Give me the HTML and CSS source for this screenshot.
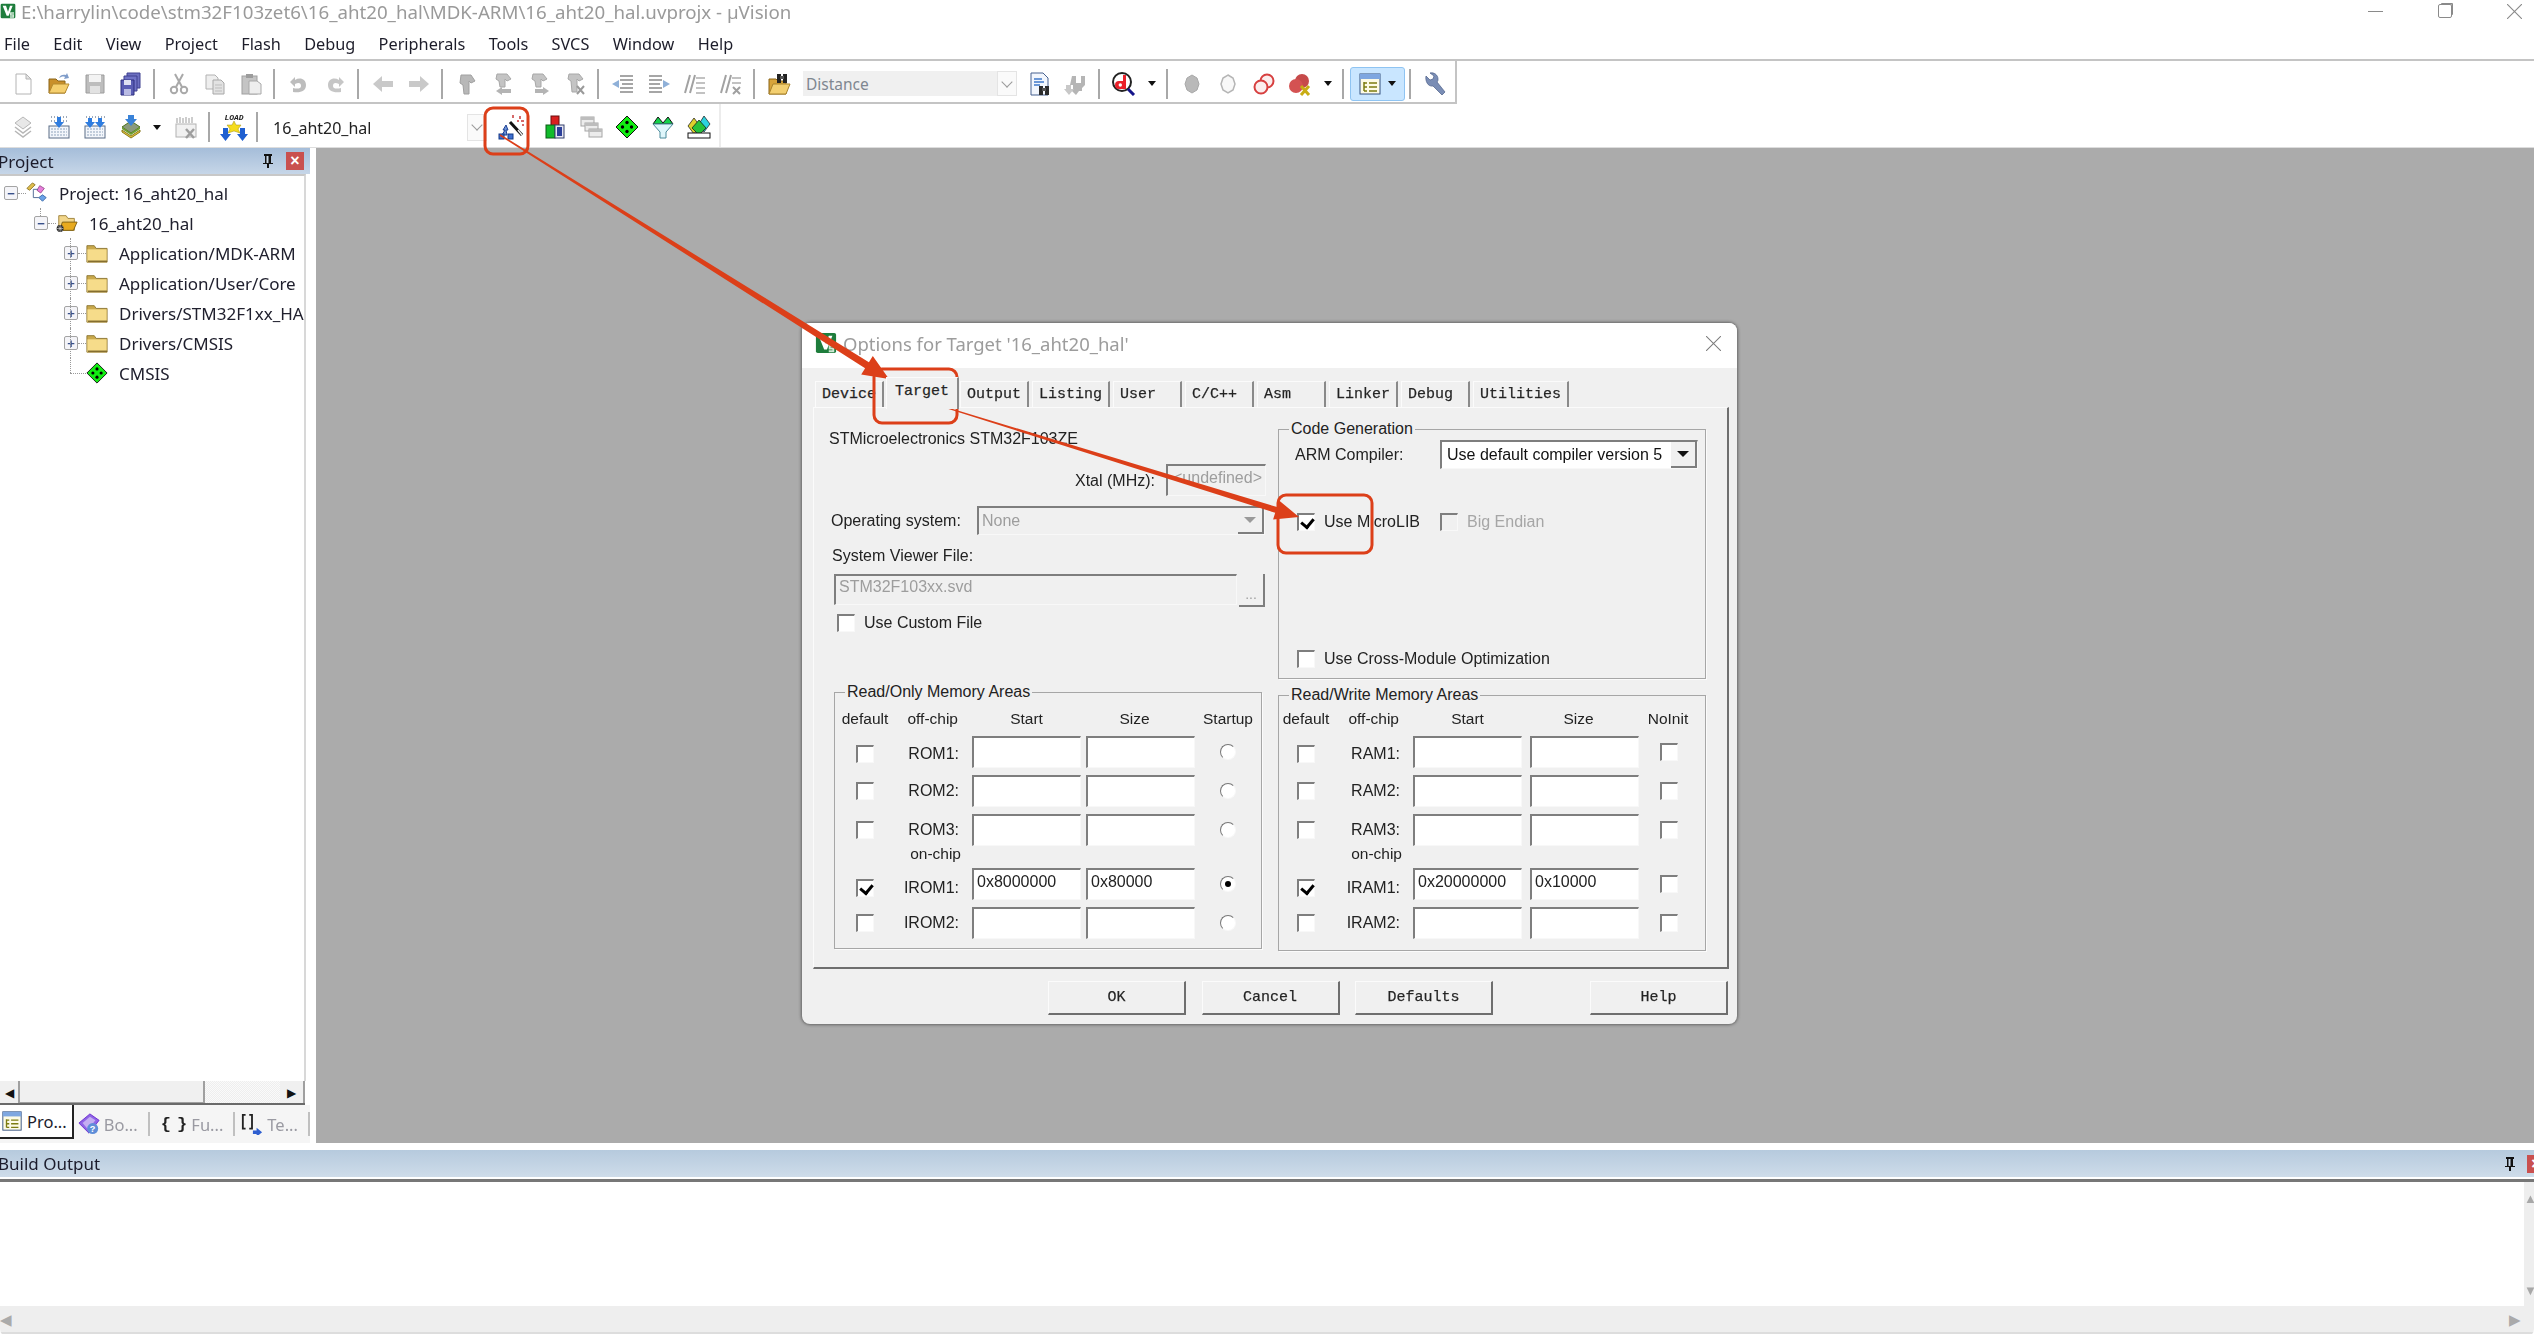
FILE: index.html
```html
<!DOCTYPE html>
<html lang="en">
<head>
    <meta charset="UTF-8">
    <meta name="viewport" content="width=device-width, initial-scale=1.0">
    <title>Options for Target</title>
    <link rel="stylesheet" href="styles.css">
</head>
<body>
<svg class="defs" width="0" height="0">
    <symbol id="i-logo" viewBox="0 0 24 24"><rect x="1" y="1" width="22" height="22" rx="2" fill="#1e7d3c"/><path d="M4 4l6 15 3 0 6-15-4 0-3 9-3-9z" fill="#fff"/><path d="M15 14h6v2h-4v1h4v5h-6v-2h4v-1h-4z" fill="#cfe8d5"/></symbol>
    <symbol id="i-new" viewBox="0 0 24 24"><path d="M5 2h10l5 5v15H5z" fill="#fff" stroke="#b4b4b4"/><path d="M15 2v5h5z" fill="#e4e4e4" stroke="#b4b4b4"/></symbol>
    <symbol id="i-open" viewBox="0 0 24 24"><path d="M2 7h7l2 2h7v12H2z" fill="#c98f2a" stroke="#8a6418"/><path d="M2 21l4-9h16l-4 9z" fill="#f5cf6e" stroke="#b58a2e"/><path d="M12 6c1-3 4-4 7-3l1-2 2 5-5 1 1-2c-2-1-4 0-6 1z" fill="#7f9cc9"/></symbol>
    <symbol id="i-save" viewBox="0 0 24 24"><path d="M3 3h18v18H3z" fill="#bdbdbd" stroke="#9c9c9c"/><rect x="6" y="3" width="12" height="7" fill="#f3f3f3"/><rect x="7" y="14" width="10" height="7" fill="#e2e2e2"/></symbol>
    <symbol id="i-saveall" viewBox="0 0 24 24"><path d="M8 1h13v15H8z" fill="#6c6fc0" stroke="#3e4090"/><path d="M5 4h13v15H5z" fill="#7073c6" stroke="#3e4090"/><path d="M2 8h13v15H2z" fill="#5a5db4" stroke="#2f3180"/><rect x="5" y="8" width="7" height="5" fill="#dfe0f3"/><rect x="5" y="17" width="7" height="6" fill="#b9bbe4"/></symbol>
    <symbol id="i-cut" viewBox="0 0 24 24"><g fill="none" stroke="#a9a9a9" stroke-width="2"><path d="M8 2l7 13M16 2L9 15"/><circle cx="7" cy="18" r="3.2"/><circle cx="17" cy="18" r="3.2"/></g></symbol>
    <symbol id="i-copy" viewBox="0 0 24 24"><path d="M3 3h9l3 3v11H3z" fill="#eee" stroke="#b2b2b2"/><path d="M10 8h8l3 3v11H10z" fill="#e2e2e2" stroke="#a8a8a8"/><path d="M12 13h7M12 16h7M12 19h7" stroke="#bdbdbd"/></symbol>
    <symbol id="i-paste" viewBox="0 0 24 24"><rect x="3" y="4" width="15" height="18" fill="#c4c4c4" stroke="#a0a0a0"/><rect x="7" y="2" width="7" height="4" fill="#9c9c9c"/><path d="M10 9h8l4 3v10H10z" fill="#eee" stroke="#a8a8a8"/></symbol>
    <symbol id="i-undo" viewBox="0 0 24 24"><path d="M6 20c8 1 13-1 13-7s-6-8-11-5V5L3 10l5 5v-3c4-2 6-1 6 2s-4 3-8 2z" fill="#bdbdbd"/></symbol>
    <symbol id="i-redo" viewBox="0 0 24 24"><path d="M18 20c-8 1-13-1-13-7s6-8 11-5V5l5 5-5 5v-3c-4-2-6-1-6 2s4 3 8 2z" fill="#c6c6c6"/></symbol>
    <symbol id="i-left" viewBox="0 0 24 24"><path d="M2 12l9-8v5h11v6H11v5z" fill="#c9c9c9"/></symbol>
    <symbol id="i-right" viewBox="0 0 24 24"><path d="M22 12l-9-8v5H2v6h11v5z" fill="#c9c9c9"/></symbol>
    <symbol id="i-flag" viewBox="0 0 24 24"><path d="M6 3h10l4 6-4 2-2-2v13H9l-1-9-3-2z" fill="#b8b8b8" stroke="#a0a0a0"/></symbol>
    <symbol id="i-flagl" viewBox="0 0 24 24"><path d="M6 2h10l4 5-4 2-2-2v8H9l-1-6-3-2z" fill="#c4c4c4" stroke="#a8a8a8"/><path d="M5 19l6-4v2h9v4h-9v2z" fill="#b4b4b4"/></symbol>
    <symbol id="i-flagr" viewBox="0 0 24 24"><path d="M6 2h10l4 5-4 2-2-2v8H9l-1-6-3-2z" fill="#c4c4c4" stroke="#a8a8a8"/><path d="M22 19l-6-4v2H8v4h8v2z" fill="#b4b4b4"/></symbol>
    <symbol id="i-flagx" viewBox="0 0 24 24"><path d="M6 2h10l4 5-4 2-2-2v13H9l-1-11-3-2z" fill="#c4c4c4" stroke="#a8a8a8"/><path d="M14 14l7 8m0-8l-7 8" stroke="#9a9a9a" stroke-width="2"/></symbol>
    <symbol id="i-indent" viewBox="0 0 24 24"><path d="M9 4h13M9 8h13M11 12h11M9 16h13M9 20h13" stroke="#a6a6a6" stroke-width="2"/><path d="M1 12l7-4v8z" fill="#8fb0d8"/></symbol>
    <symbol id="i-outdent" viewBox="0 0 24 24"><path d="M2 4h13M2 8h13M2 12h11M2 16h13M2 20h13" stroke="#a6a6a6" stroke-width="2"/><path d="M23 12l-7-4v8z" fill="#8fb0d8"/></symbol>
    <symbol id="i-comment" viewBox="0 0 24 24"><path d="M2 21L7 3M7 21L12 3" stroke="#a2a2a2" stroke-width="2"/><path d="M13 6h9M13 11h9M13 16h9M13 21h9" stroke="#c2c2c2" stroke-width="2"/></symbol>
    <symbol id="i-uncomment" viewBox="0 0 24 24"><path d="M2 21L7 3M7 21L12 3" stroke="#a2a2a2" stroke-width="2"/><path d="M13 6h9M13 11h9" stroke="#c2c2c2" stroke-width="2"/><path d="M14 15l7 7m0-7l-7 7" stroke="#a0a0a0" stroke-width="2"/></symbol>
    <symbol id="i-findfile" viewBox="0 0 24 24"><path d="M2 7h7l2 2h8v13H2z" fill="#d8a43a" stroke="#8a6418"/><path d="M2 22l4-10h17l-4 10z" fill="#f3cf70" stroke="#a9832b"/><rect x="10" y="2" width="4" height="9" fill="#222"/><rect x="16" y="2" width="4" height="9" fill="#222"/><rect x="13" y="4" width="4" height="3" fill="#555"/></symbol>
    <symbol id="i-finddoc" viewBox="0 0 24 24"><path d="M3 1h12l5 5v17H3z" fill="#f2f6fd" stroke="#47618f"/><path d="M6 7h8M6 10h10M6 13h6" stroke="#3f78c9" stroke-width="1.5"/><rect x="11" y="14" width="4" height="9" fill="#2b2b2b"/><rect x="17" y="14" width="4" height="9" fill="#2b2b2b"/><rect x="14" y="16" width="4" height="3" fill="#555"/></symbol>
    <symbol id="i-findgray" viewBox="0 0 24 24"><path d="M8 4l4 0v7h5V4h4v9l-3 3v3h-3l-3 4-6-6h3v-4H6z" fill="#b5b5b5"/><path d="M2 13h5v4h3l-5 6-5-6h2z" fill="#c8c8c8"/></symbol>
    <symbol id="i-debug" viewBox="0 0 24 24"><circle cx="10" cy="10" r="9" fill="#fff" stroke="#222" stroke-width="2"/><path d="M11 3h3v14h-7a4 4 0 0 1 0-8h4z" fill="#e9202a"/><circle cx="8.300" cy="13" r="1.700" fill="#fff"/><path d="M16 17l6 6" stroke="#14148a" stroke-width="3"/></symbol>
    <symbol id="i-bp" viewBox="0 0 24 24"><path d="M12 3l5 3 2 6-2 6-5 3-5-3-2-6 2-6z" fill="#b9b9b9" stroke="#a8a8a8"/></symbol>
    <symbol id="i-bphollow" viewBox="0 0 24 24"><path d="M12 3l5 3 2 6-2 6-5 3-5-3-2-6 2-6z" fill="#f8f8f8" stroke="#b5b5b5" stroke-width="1.500"/></symbol>
    <symbol id="i-bpmany" viewBox="0 0 24 24"><circle cx="15" cy="9" r="6.500" fill="#fbeeee" stroke="#d73f3f" stroke-width="2"/><circle cx="9" cy="15" r="6.500" fill="#fbeeee" stroke="#d73f3f" stroke-width="2"/></symbol>
    <symbol id="i-bpkill" viewBox="0 0 24 24"><circle cx="14" cy="9" r="7" fill="#c64a4a"/><circle cx="8" cy="14" r="7" fill="#d45252"/><path d="M13 14l8 9m0-9l-8 9" stroke="#c9ad14" stroke-width="3"/></symbol>
    <symbol id="i-window" viewBox="0 0 24 24"><rect x="2" y="2" width="20" height="20" fill="#fdfbe6" stroke="#34507f"/><rect x="2" y="2" width="20" height="5" fill="#7fa7e0"/><path d="M6 10v9M6 11h3M6 15h3M6 19h3M11 11h8M11 15h8M11 19h8" stroke="#7c7c10" stroke-width="1.500"/></symbol>
    <symbol id="i-wrench" viewBox="0 0 24 24"><path d="M3 4l4 4 3-1 1-3-4-3c4-1 8 2 8 6 0 1 0 2-1 3l8 10-3 3-9-9c-5 1-8-5-7-10z" fill="#7a8db5" stroke="#4c5f88" stroke-width=".7"/></symbol>
    <symbol id="i-stack" viewBox="0 0 24 24"><path d="M12 2l8 6-8 6-8-6z" fill="#e8e8e8" stroke="#b6b6b6"/><path d="M4 12l8 6 8-6M4 16l8 6 8-6" fill="none" stroke="#b6b6b6" stroke-width="1.500"/></symbol>
    <symbol id="i-build" viewBox="0 0 24 24"><path d="M4 2h1M7 2h1M10 2h1M13 2h1M16 2h1M19 2h1M4 6h1M7 6h1M16 6h1M19 6h1" stroke="#7d8da3" stroke-width="1.500"/><rect x="2" y="11" width="20" height="12" fill="#f3f6fb" stroke="#5a6d86"/><path d="M4 14h16M4 17h16M4 20h16" stroke="#8fa3bb" stroke-dasharray="2 1"/><path d="M10 2h4v5h3l-5 6-5-6h3z" fill="#2f7de0"/></symbol>
    <symbol id="i-rebuild" viewBox="0 0 24 24"><path d="M3 2h1M6 2h1M9 2h1M12 2h1M15 2h1M18 2h1M21 2h1" stroke="#7d8da3" stroke-width="1.500"/><rect x="2" y="11" width="20" height="12" fill="#f3f6fb" stroke="#5a6d86"/><path d="M4 14h16M4 17h16M4 20h16" stroke="#8fa3bb" stroke-dasharray="2 1"/><path d="M5 3h4v4h3l-5 6-5-6h3zM15 3h4v4h3l-5 6-5-6h3z" fill="#2f7de0"/></symbol>
    <symbol id="i-batch" viewBox="0 0 24 24"><path d="M12 6l9 6-9 6-9-6z" fill="#8a9a7d" stroke="#4e7118"/><path d="M3 15l9 6 9-6v2l-9 6-9-6z" fill="#e7c63a" stroke="#8a7a1e"/><path d="M3 12l9 6 9-6v2l-9 6-9-6z" fill="#6d9f2e"/><path d="M9 0h6v4h3l-6 7-6-7h3z" fill="#3a83d8"/></symbol>
    <symbol id="i-stop" viewBox="0 0 24 24"><rect x="2" y="9" width="20" height="13" fill="#f1f1f1" stroke="#b2b2b2"/><path d="M3 3v5M6 2v6M9 3v5M12 2v6M15 3v5M18 2v6" stroke="#bdbdbd" stroke-width="1.500"/><path d="M12 14l8 9m0-9l-8 9" stroke="#9e9e9e" stroke-width="2.500"/></symbol>
    <symbol id="i-load" viewBox="0 0 28 28"><text x="14" y="7" text-anchor="middle" font-family="Liberation Mono" font-size="8" font-weight="700" fill="#222">LOAD</text><path d="M14 8l2 4 5 0-3 4 2 4-6-2-6 2 2-4-3-4 5 0z" fill="#f5dc1e" stroke="#a08f10" stroke-width=".5"/><path d="M3 15h5v6h3l-5.500 7L0 21h3zM20 15h5v6h3l-5.500 7L17 21h3z" fill="#1f5fd0"/></symbol>
    <symbol id="i-wand" viewBox="0 0 28 28"><path d="M12 9l12 13" stroke="#111" stroke-width="3"/><path d="M20 17l4 5" stroke="#eee" stroke-width="1.500"/><path d="M15 2v3M22 3v3M26 8h-3M19 8h2M24 12h2" stroke="#c83a3a" stroke-width="1.500"/><path d="M8 12l-3 5h2l-3 5h5l-1-5h2z" fill="#6d93d6" stroke="#1c3f94"/><rect x="1" y="21" width="5" height="5" fill="#3d6fd0" stroke="#133a8a"/><rect x="10" y="21" width="5" height="5" fill="#3d6fd0" stroke="#133a8a"/></symbol>
    <symbol id="i-blocks" viewBox="0 0 24 24"><rect x="8" y="1" width="8" height="10" fill="#d81f1f" stroke="#6b0f0f"/><rect x="3" y="10" width="9" height="13" fill="#11bb2b" stroke="#0a5c16"/><rect x="12" y="10" width="9" height="13" fill="#e6e6f2" stroke="#35406d"/><rect x="14" y="12" width="5" height="9" fill="#2c3f9a"/></symbol>
    <symbol id="i-copies" viewBox="0 0 24 24"><rect x="2" y="2" width="13" height="9" fill="#ececec" stroke="#a6a6a6"/><rect x="2" y="2" width="13" height="3" fill="#bdbdbd"/><rect x="6" y="8" width="13" height="8" fill="#ececec" stroke="#a6a6a6"/><rect x="6" y="8" width="13" height="3" fill="#bdbdbd"/><rect x="10" y="14" width="13" height="8" fill="#ececec" stroke="#a6a6a6"/><rect x="10" y="14" width="13" height="3" fill="#bdbdbd"/></symbol>
    <symbol id="i-diamond" viewBox="0 0 24 24"><path d="M12 1l11 11-11 11L1 12z" fill="#12ee12" stroke="#111"/><circle cx="12" cy="7.500" r="1.700"/><circle cx="7.500" cy="12" r="1.700"/><circle cx="16.500" cy="12" r="1.700"/><circle cx="12" cy="16.500" r="1.700"/></symbol>
    <symbol id="i-funnel" viewBox="0 0 24 24"><path d="M7 2l5 6 5-6 5 7H2z" fill="#14d24a" stroke="#111"/><path d="M2 9h20l-7 8v6H9v-6z" fill="#dff6fb" stroke="#4a8a9a"/></symbol>
    <symbol id="i-packs" viewBox="0 0 24 24"><path d="M17 1l6 8-6 8-5-8z" fill="#2dd3de" stroke="#111" stroke-width=".7"/><path d="M7 3l6 8-6 8-6-8z" fill="#ded02d" stroke="#111" stroke-width=".7"/><path d="M12 5l7 8-7 7-7-7z" fill="#27c23a" stroke="#111" stroke-width=".7"/><rect x="1" y="18" width="22" height="5" fill="#fff" stroke="#111"/></symbol>
    <symbol id="i-proj" viewBox="0 0 24 24"><path d="M1 7l6-6 3 2-6 6z" fill="#e0bd4c" stroke="#8d7624"/><path d="M15 4l5 3-4 5-4-3z" fill="#e87fdc" stroke="#9b4d92"/><path d="M18 14l4 3-4 4-4-4z" fill="#6aa3e8" stroke="#3e6cab"/><path d="M8 8v9h6M8 8h5" fill="none" stroke="#4a6690"/></symbol>
    <symbol id="i-folderopen" viewBox="0 0 24 24"><path d="M3 4h8l2 3h7v13H3z" fill="#f2d68a" stroke="#9e8139"/><path d="M4 20l3-9h16l-4 9z" fill="#e8aa1f" stroke="#7d5f14"/><circle cx="4.500" cy="18" r="3.800" fill="#222"/><path d="M1 18h7M4.500 14v8M2 15.500l5 5m0-5l-5 5" stroke="#ddd" stroke-width=".7"/></symbol>
    <symbol id="i-folder" viewBox="0 0 24 24"><path d="M1 4h8l2 3h12v15H1z" fill="#c9a94c" stroke="#8d7632"/><rect x="1.500" y="8" width="21" height="14" fill="#f6dc8a"/><path d="M2 21h21" stroke="#7d6729" stroke-width="1.500"/></symbol>
    <symbol id="i-book" viewBox="0 0 24 24"><path d="M1 11L13 1l10 7-11 14z" fill="#8f64e6" stroke="#6a2bd0"/><path d="M5 11l8-7 6 4-8 10z" fill="#c4aef2"/><circle cx="16" cy="17" r="6" fill="#5f8ed8"/><text x="16" y="21" text-anchor="middle" font-family="Liberation Sans" font-size="10" font-weight="700" fill="#fff">?</text></symbol>
    <symbol id="i-template" viewBox="0 0 24 24"><path d="M5 2H2v15h3M9 2h3v15H9" fill="none" stroke="#222" stroke-width="2"/><path d="M13 19h4v-3l6 5-6 5v-3h-4z" fill="#2f5fd0"/></symbol>
    <symbol id="i-pin" viewBox="0 0 16 16"><path d="M4 1h8v2h-1v7h2v1H9v4H7v-4H3v-1h2V3H4z" fill="#111"/><rect x="6.500" y="3" width="2" height="7" fill="#c8d8e8"/></symbol>
</svg>

<div class="app">
    <header class="titlebar">
        <svg class="title-logo"><use href="#i-logo"/></svg>
        <span class="title-text">E:\harrylin\code\stm32F103zet6\16_aht20_hal\MDK-ARM\16_aht20_hal.uvprojx - µVision</span>
        <div class="win-controls">
            <span class="win-min"></span>
            <span class="win-restore"></span>
            <svg class="win-close" viewBox="0 0 16 16"><path d="M0 0l16 16M16 0L0 16" stroke="#8a8a8a" stroke-width="1.200"/></svg>
        </div>
    </header>

    <nav class="menubar">
        <a>File</a><a>Edit</a><a>View</a><a>Project</a><a>Flash</a><a>Debug</a><a>Peripherals</a><a>Tools</a><a>SVCS</a><a>Window</a><a>Help</a>
    </nav>

    <div class="toolbar toolbar-file">
        <i class="tb"><svg><use href="#i-new"/></svg></i>
        <i class="tb"><svg><use href="#i-open"/></svg></i>
        <i class="tb"><svg><use href="#i-save"/></svg></i>
        <i class="tb"><svg><use href="#i-saveall"/></svg></i>
        <b class="tb-sep"></b>
        <i class="tb"><svg><use href="#i-cut"/></svg></i>
        <i class="tb"><svg><use href="#i-copy"/></svg></i>
        <i class="tb"><svg><use href="#i-paste"/></svg></i>
        <b class="tb-sep"></b>
        <i class="tb"><svg><use href="#i-undo"/></svg></i>
        <i class="tb"><svg><use href="#i-redo"/></svg></i>
        <b class="tb-sep"></b>
        <i class="tb"><svg><use href="#i-left"/></svg></i>
        <i class="tb"><svg><use href="#i-right"/></svg></i>
        <b class="tb-sep"></b>
        <i class="tb"><svg><use href="#i-flag"/></svg></i>
        <i class="tb"><svg><use href="#i-flagl"/></svg></i>
        <i class="tb"><svg><use href="#i-flagr"/></svg></i>
        <i class="tb"><svg><use href="#i-flagx"/></svg></i>
        <b class="tb-sep"></b>
        <i class="tb"><svg><use href="#i-indent"/></svg></i>
        <i class="tb"><svg><use href="#i-outdent"/></svg></i>
        <i class="tb"><svg><use href="#i-comment"/></svg></i>
        <i class="tb"><svg><use href="#i-uncomment"/></svg></i>
        <b class="tb-sep"></b>
        <i class="tb"><svg><use href="#i-findfile"/></svg></i>
        <div class="tb-combo disabled"><span>Distance</span><em class="chev"></em></div>
        <i class="tb"><svg><use href="#i-finddoc"/></svg></i>
        <i class="tb"><svg><use href="#i-findgray"/></svg></i>
        <b class="tb-sep"></b>
        <i class="tb"><svg><use href="#i-debug"/></svg></i>
        <u class="tb-drop"></u>
        <b class="tb-sep"></b>
        <i class="tb"><svg><use href="#i-bp"/></svg></i>
        <i class="tb"><svg><use href="#i-bphollow"/></svg></i>
        <i class="tb"><svg><use href="#i-bpmany"/></svg></i>
        <i class="tb"><svg><use href="#i-bpkill"/></svg></i>
        <u class="tb-drop"></u>
        <b class="tb-sep"></b>
        <div class="tb-active"><svg><use href="#i-window"/></svg><u class="tb-drop"></u></div>
        <b class="tb-sep"></b>
        <i class="tb"><svg><use href="#i-wrench"/></svg></i>
    </div>

    <div class="toolbar toolbar-build">
        <i class="tb"><svg><use href="#i-stack"/></svg></i>
        <i class="tb"><svg><use href="#i-build"/></svg></i>
        <i class="tb"><svg><use href="#i-rebuild"/></svg></i>
        <i class="tb"><svg><use href="#i-batch"/></svg></i>
        <u class="tb-drop narrow"></u>
        <i class="tb tb-stop"><svg><use href="#i-stop"/></svg></i>
        <b class="tb-sep"></b>
        <i class="tb tb-load"><svg><use href="#i-load"/></svg></i>
        <b class="tb-sep"></b>
        <div class="tb-combo target"><span>16_aht20_hal</span><em class="chev"></em></div>
        <i class="tb tb-wand"><svg><use href="#i-wand"/></svg></i>
        <i class="tb tb-blocks"><svg><use href="#i-blocks"/></svg></i>
        <i class="tb"><svg><use href="#i-copies"/></svg></i>
        <i class="tb"><svg><use href="#i-diamond"/></svg></i>
        <i class="tb"><svg><use href="#i-funnel"/></svg></i>
        <i class="tb"><svg><use href="#i-packs"/></svg></i>
    </div>

    <div class="workspace">
        <aside class="project">
            <div class="dock-head">
                <span class="dock-title">Project</span>
                <svg class="dock-pin"><use href="#i-pin"/></svg>
                <span class="dock-close">×</span>
            </div>
            <ul class="tree">
                <li class="node lv1"><span class="box">−</span><svg class="ico"><use href="#i-proj"/></svg><span>Project: 16_aht20_hal</span></li>
                <li class="node lv2"><span class="box">−</span><svg class="ico"><use href="#i-folderopen"/></svg><span>16_aht20_hal</span></li>
                <li class="node lv3"><span class="box">+</span><svg class="ico"><use href="#i-folder"/></svg><span>Application/MDK-ARM</span></li>
                <li class="node lv3"><span class="box">+</span><svg class="ico"><use href="#i-folder"/></svg><span>Application/User/Core</span></li>
                <li class="node lv3"><span class="box">+</span><svg class="ico"><use href="#i-folder"/></svg><span>Drivers/STM32F1xx_HAL_Driver</span></li>
                <li class="node lv3"><span class="box">+</span><svg class="ico"><use href="#i-folder"/></svg><span>Drivers/CMSIS</span></li>
                <li class="node lv3 leaf"><span class="box none"></span><svg class="ico"><use href="#i-diamond"/></svg><span>CMSIS</span></li>
            </ul>
            <div class="hscroll">
                <span class="sb-btn">◀</span>
                <span class="sb-thumb"></span>
                <span class="sb-track"></span>
                <span class="sb-btn">▶</span>
            </div>
            <div class="dock-tabs">
                <div class="dock-tab active"><svg><use href="#i-window"/></svg><span>Pro...</span></div>
                <div class="dock-tab"><svg><use href="#i-book"/></svg><span>Bo...</span></div>
                <div class="dock-tab"><strong>{ }</strong><span>Fu...</span></div>
                <div class="dock-tab"><svg><use href="#i-template"/></svg><span>Te...</span></div>
            </div>
        </aside>

        <main class="mdi">
            <section class="dialog">
                <div class="dlg-title">
                    <svg class="dlg-logo"><use href="#i-logo"/></svg>
                    <span class="dlg-caption">Options for Target '16_aht20_hal'</span>
                    <svg class="dlg-close" viewBox="0 0 16 16"><path d="M0 0l16 16M16 0L0 16" stroke="#7c7c7c" stroke-width="1.100"/></svg>
                </div>

                <div class="tabs">
                    <span class="tab">Device</span>
                    <span class="tab selected">Target</span>
                    <span class="tab">Output</span>
                    <span class="tab">Listing</span>
                    <span class="tab">User</span>
                    <span class="tab">C/C++</span>
                    <span class="tab">Asm</span>
                    <span class="tab">Linker</span>
                    <span class="tab">Debug</span>
                    <span class="tab">Utilities</span>
                </div>

                <div class="pane">
                    <div class="device">
                        <div class="device-name">STMicroelectronics STM32F103ZE</div>
                        <div class="xtal"><label>Xtal (MHz):</label><span class="field off">&lt;undefined&gt;</span></div>
                        <div class="os"><label>Operating system:</label><div class="field off select"><span>None</span><em class="arrow grey"></em></div></div>
                        <div class="svd-label">System Viewer File:</div>
                        <div class="svd"><span class="field off">STM32F103xx.svd</span><button class="dots">...</button></div>
                        <label class="check custom"><i class="cb"></i>Use Custom File</label>
                    </div>

                    <div class="group codegen">
                        <span class="group-title">Code Generation</span>
                        <div class="compiler"><label>ARM Compiler:</label><div class="field select"><span>Use default compiler version 5</span><em class="arrow"></em></div></div>
                        <div class="libs">
                            <label class="check micro"><i class="cb on"></i>Use MicroLIB</label>
                            <label class="check dim"><i class="cb"></i>Big Endian</label>
                        </div>
                        <label class="check cross"><i class="cb"></i>Use Cross-Module Optimization</label>
                    </div>

                    <div class="group mem rom">
                        <span class="group-title">Read/Only Memory Areas</span>
                        <span class="hd">default</span><span class="hd off-chip">off-chip</span><span class="hd start">Start</span><span class="hd size">Size</span><span class="hd last">Startup</span>
                        <span class="c low"><i class="cb"></i></span><span class="n low">ROM1:</span><span class="field"></span><span class="field"></span><span class="c end"><i class="rb"></i></span>
                        <span class="c"><i class="cb"></i></span><span class="n">ROM2:</span><span class="field"></span><span class="field"></span><span class="c end"><i class="rb"></i></span>
                        <span class="c"><i class="cb"></i></span><span class="n">ROM3:</span><span class="field"></span><span class="field"></span><span class="c end"><i class="rb"></i></span>
                        <span class="on-chip">on-chip</span>
                        <span class="c lower"><i class="cb on"></i></span><span class="n lower">IROM1:</span><span class="field val">0x8000000</span><span class="field val">0x80000</span><span class="c end"><i class="rb on"></i></span>
                        <span class="c"><i class="cb"></i></span><span class="n">IROM2:</span><span class="field"></span><span class="field"></span><span class="c end"><i class="rb"></i></span>
                    </div>

                    <div class="group mem ram">
                        <span class="group-title">Read/Write Memory Areas</span>
                        <span class="hd">default</span><span class="hd off-chip">off-chip</span><span class="hd start">Start</span><span class="hd size">Size</span><span class="hd last">NoInit</span>
                        <span class="c low"><i class="cb"></i></span><span class="n low">RAM1:</span><span class="field"></span><span class="field"></span><span class="c end"><i class="cb"></i></span>
                        <span class="c"><i class="cb"></i></span><span class="n">RAM2:</span><span class="field"></span><span class="field"></span><span class="c end"><i class="cb"></i></span>
                        <span class="c"><i class="cb"></i></span><span class="n">RAM3:</span><span class="field"></span><span class="field"></span><span class="c end"><i class="cb"></i></span>
                        <span class="on-chip">on-chip</span>
                        <span class="c lower"><i class="cb on"></i></span><span class="n lower">IRAM1:</span><span class="field val">0x20000000</span><span class="field val">0x10000</span><span class="c end"><i class="cb"></i></span>
                        <span class="c"><i class="cb"></i></span><span class="n">IRAM2:</span><span class="field"></span><span class="field"></span><span class="c end"><i class="cb"></i></span>
                    </div>
                </div>

                <div class="dlg-buttons">
                    <button>OK</button>
                    <button>Cancel</button>
                    <button>Defaults</button>
                    <button class="help">Help</button>
                </div>
            </section>
        </main>
    </div>

    <footer class="output">
        <div class="dock-head output-head">
            <span class="dock-title">Build Output</span>
            <svg class="dock-pin"><use href="#i-pin"/></svg>
            <span class="dock-close">×</span>
        </div>
        <div class="output-body">
            <div class="output-text"></div>
            <div class="vscroll"><span>▲</span><span>▼</span></div>
        </div>
        <div class="output-scroll"><span>◀</span><span>▶</span></div>
    </footer>

    <!-- red annotations drawn on top of the screenshot -->
    <svg class="marks" viewBox="0 0 2534 1337">
        <g fill="none" stroke="#dc3f19" stroke-width="3">
            <rect x="485" y="108" width="43" height="46" rx="8"/>
            <rect x="874" y="369" width="83" height="54" rx="8"/>
            <rect x="1278" y="495" width="94" height="58" rx="8"/>
        </g>
        <g fill="#dc3f19">
            <polygon points="500.4,134.3 868.9,362.2 872.8,355.9 889,379 861.2,374.5 865.1,368.2 499.6,135.7"/>
            <polygon points="928.1,401.5 1277,507 1279.1,500.4 1299,517 1273.1,519.4 1275.2,512.8 927.9,402.5"/>
        </g>
    </svg>
</div>
</body>
</html>
```

FILE: styles.css
```css
* {
    margin: 0;
    padding: 0;
    box-sizing: border-box;
}

body {
    background: #fff;
    font-family: "Noto Sans", sans-serif;
    color: #222;
}

.defs {
    position: absolute;
}

/* the source is an upscaled capture, so everything is a little soft */
.app {
    position: relative;
    width: 2534px;
    height: 1337px;
    overflow: hidden;
    display: flex;
    flex-direction: column;
    filter: blur(.35px);
}

/* Title bar */
.titlebar {
    height: 22px;
    display: flex;
    align-items: center;
    flex-shrink: 0;
}

.title-logo {
    width: 16px;
    height: 20px;
    margin-right: 5px;
}

.title-text {
    font-size: 18.700px;
    color: #9a9a9a;
    white-space: nowrap;
}

.win-controls {
    margin-left: auto;
    margin-right: 12px;
    display: flex;
    align-items: center;
    gap: 55px;
    height: 20px;
}

.win-min {
    width: 15px;
    height: 1px;
    background: #8a8a8a;
}

.win-restore {
    width: 14px;
    height: 14px;
    border: 1px solid #8a8a8a;
    border-radius: 2px;
    box-shadow: 2px -2px 0 -1px #8a8a8a;
}

.win-close {
    width: 15px;
    height: 15px;
}

/* Menu bar */
.menubar {
    height: 39px;
    flex-shrink: 0;
    display: flex;
    align-items: center;
    gap: 23.300px;
    padding: 7px 0 0 4px;
    border-bottom: 2px solid #c4c4c4;
    font-size: 16.300px;
    color: #1d1d2a;
}

/* Toolbars */
.toolbar {
    height: 43px;
    flex-shrink: 0;
    display: flex;
    align-items: center;
    padding: 3px 0 0 5px;
    background: #fff;
    border-bottom: 2px solid #c4c4c4;
    border-right: 2px solid #c4c4c4;
}

.toolbar-file {
    width: 1457px;
    padding-top: 4px;
}

.toolbar-build {
    width: 721px;
    border-bottom: none;
    border-right-color: #ececec;
}

.tb {
    width: 36px;
    height: 36px;
    flex-shrink: 0;
    display: flex;
    align-items: center;
    justify-content: center;
}

.tb svg {
    width: 24px;
    height: 24px;
}

.tb-load svg {
    width: 28px;
    height: 28px;
}

.tb-wand svg {
    width: 28px;
    height: 28px;
}

.tb-sep {
    width: 2px;
    height: 30px;
    flex-shrink: 0;
    margin: 0 6px 0 4px;
    background: #a8a8a8;
}

.tb-drop {
    width: 20px;
    height: 30px;
    flex-shrink: 0;
    display: flex;
    align-items: center;
    justify-content: center;
    text-decoration: none;
}

.tb-drop::before {
    content: "";
    border: 4px solid transparent;
    border-top: 5px solid #111;
    border-bottom: none;
}

.tb-drop.narrow {
    width: 16px;
}

.tb-stop {
    margin-left: 3px;
}

.tb-active {
    width: 55px;
    height: 34px;
    flex-shrink: 0;
    display: flex;
    align-items: center;
    padding-left: 7px;
    background: #c9e6ff;
    border: 1px solid #8fc4f2;
    border-radius: 3px;
}

.tb-active svg {
    width: 24px;
    height: 24px;
}

.tb-combo {
    display: flex;
    align-items: center;
    flex-shrink: 0;
    white-space: nowrap;
}

.tb-combo span {
    flex: 1;
}

.tb-combo.disabled {
    width: 214px;
    height: 25px;
    margin: 0 5px 0 6px;
    background: #f0f0f0;
    color: #7f8791;
    font-size: 15.500px;
    padding-left: 3px;
}

.tb-combo.target {
    width: 223px;
    height: 27px;
    padding-left: 9px;
    font-size: 16px;
}

.tb-combo.target span {
    padding-top: 2px;
}

.chev {
    width: 20px;
    height: 100%;
    flex-shrink: 0;
    display: flex;
    align-items: center;
    justify-content: center;
    background: #fafafa;
    border: 1px solid #e4e4e4;
}

.chev::before {
    content: "";
    width: 7px;
    height: 7px;
    margin-top: -4px;
    border-right: 1px solid #9a9a9a;
    border-bottom: 1px solid #9a9a9a;
    transform: rotate(45deg);
}

.tb-wand {
    margin-left: 7px;
}

.tb-blocks {
    margin-left: 7px;
}

/* Main area */
.workspace {
    position: relative;
    height: 996px;
    flex-shrink: 0;
    display: flex;
    border-top: 1px solid #ddd;
}

.project {
    width: 316px;
    flex-shrink: 0;
    display: flex;
    flex-direction: column;
    background: #fff;
    padding-right: 6px;
}

.mdi {
    flex: 1;
    background: #ababab;
}

.dock-head {
    height: 26px;
    flex-shrink: 0;
    display: flex;
    align-items: center;
    background: linear-gradient(#a5bdd9, #c6d6e8);
    font-size: 17px;
    color: #1c1c2c;
}

.dock-title {
    margin-left: -2px;
}

.dock-pin {
    width: 16px;
    height: 16px;
    margin-left: auto;
}

.dock-close {
    width: 18px;
    height: 18px;
    margin: 0 6px 0 10px;
    display: flex;
    align-items: center;
    justify-content: center;
    background: #c9504f;
    color: #fff;
    font: bold 16px "Liberation Sans", sans-serif;
}

.tree {
    flex: 1;
    list-style: none;
    overflow: hidden;
    margin-right: 4px;
    padding-top: 2px;
    border-top: 2px solid #c8c8c8;
    border-right: 2px solid #d8d8d8;
    font-size: 17px;
    color: #20202e;
}

.node {
    position: relative;
    height: 30px;
    display: flex;
    align-items: center;
    white-space: nowrap;
}

.node.lv1 {
    padding-left: 4px;
}

.node.lv2 {
    padding-left: 34px;
}

.node.lv3 {
    padding-left: 64px;
}

.box {
    width: 14px;
    height: 14px;
    flex-shrink: 0;
    display: flex;
    align-items: center;
    justify-content: center;
    background: #f4f4f8;
    border: 1px solid #a4a4a4;
    border-radius: 2px;
    color: #38508a;
    font: bold 13px "Liberation Sans", sans-serif;
}

.box.none {
    background: none;
    border: none;
}

.ico {
    width: 22px;
    height: 22px;
    flex-shrink: 0;
    margin: 0 11px 0 8px;
}

/* dotted tree lines */
.node::before {
    content: "";
    position: absolute;
    top: 15px;
    width: 8px;
    border-top: 1px dotted #999;
}

.lv1::before {
    left: 18px;
}

.lv2::before {
    left: 48px;
}

.lv3::before {
    left: 78px;
}

.lv2::after,
.lv3::after {
    content: "";
    position: absolute;
    top: 0;
    height: 8px;
    border-left: 1px dotted #999;
}

.lv2::after {
    left: 40px;
}

.lv3::after {
    left: 70px;
    height: 30px;
}

.leaf::after {
    height: 15px;
}

.leaf::before {
    left: 70px;
    width: 16px;
}

.hscroll {
    height: 24px;
    flex-shrink: 0;
    display: flex;
    margin-right: 5px;
    background: #f2f2f2;
    border-bottom: 2px solid #6a6a6a;
}

.sb-btn {
    width: 20px;
    display: flex;
    align-items: center;
    justify-content: center;
    background: #f0f0f0;
    border-right: 2px solid #a0a0a0;
    font-size: 12px;
    color: #111;
}

.sb-btn:last-child {
    width: 25px;
}

.sb-thumb {
    width: 185px;
    background: #f0f0f0;
    border-right: 2px solid #a0a0a0;
    border-bottom: 1px solid #a0a0a0;
}

.sb-track {
    flex: 1;
    background: repeating-conic-gradient(#eee 0 25%, #fafafa 0 50%) 0 0 / 2px 2px;
}

.dock-tabs {
    height: 38px;
    flex-shrink: 0;
    display: flex;
    align-items: center;
    background: #f5f5f5;
    font-size: 16.500px;
    color: #9a9aa2;
}

.dock-tab {
    height: 24px;
    display: flex;
    align-items: center;
    gap: 4px;
    padding: 0 10px 0 4px;
    margin-right: 2px;
    border-right: 2px solid #c0c0c0;
    white-space: nowrap;
}

.dock-tab svg {
    width: 22px;
    height: 22px;
}

.dock-tab strong {
    font: bold 17px "Liberation Mono", monospace;
    color: #222;
    margin: 0 2px 0 5px;
    letter-spacing: -2px;
}

.dock-tab.active {
    height: 34px;
    align-self: flex-start;
    padding: 0 5px 0 1px;
    margin-right: 0;
    background: #fff;
    color: #1c1c2c;
    border-right: 2px solid #222;
    border-bottom: 2px solid #222;
}

/* Options dialog: a floating window over the work area */
.dialog {
    position: absolute;
    left: 802px;
    top: 175px;
    width: 935px;
    height: 701px;
    display: flex;
    flex-direction: column;
    background: #f0f0f0;
    border-radius: 8px;
    box-shadow: 0 0 3px 1px #666;
    font: 16px "Liberation Sans", sans-serif;
    color: #222;
}

.dlg-title {
    height: 45px;
    flex-shrink: 0;
    display: flex;
    align-items: center;
    padding: 0 16px 5px 13px;
    background: #fff;
    border-radius: 8px 8px 0 0;
}

.dlg-logo {
    width: 22px;
    height: 22px;
    margin-right: 6px;
}

.dlg-caption {
    font: 18.500px "Noto Sans", sans-serif;
    color: #9c9c9c;
}

.dlg-close {
    width: 15px;
    height: 15px;
    margin-left: auto;
}

.tabs {
    display: flex;
    gap: 3px;
    height: 26px;
    margin: 13px 0 0 13px;
    flex-shrink: 0;
}

.tab {
    position: relative;
    min-width: 69px;
    padding: 0 6px;
    display: flex;
    align-items: center;
    background: #f0f0f0;
    border-top: 1px solid #fbfbfb;
    border-left: 1px solid #fbfbfb;
    border-right: 2px solid #8a8a8a;
    font: 15px "Liberation Mono", monospace;
    -webkit-text-stroke: .25px #333;
    white-space: nowrap;
}

.tab.selected {
    z-index: 1;
    height: 32px;
    margin: -4px -2px 0 -1px;
    width: 73px;
    padding: 0 0 5px 8px;
}

.pane {
    flex: 1;
    display: grid;
    grid-template-columns: 437px 428px;
    grid-template-rows: 250px 1fr;
    column-gap: 12px;
    row-gap: 13px;
    margin: 0 8px 0 11px;
    padding: 21px 0 0 15px;
    border-top: 1px solid #fbfbfb;
    border-left: 1px solid #fbfbfb;
    border-right: 2px solid #6e6e6e;
    border-bottom: 2px solid #6e6e6e;
}

.device {
    display: flex;
    flex-direction: column;
}

.device-name {
    line-height: 20px;
}

.xtal {
    display: flex;
    justify-content: flex-end;
    align-items: center;
    gap: 11px;
    margin-top: 15px;
}

.xtal label {
    padding-top: 1px;
}

.xtal .field {
    width: 100px;
    height: 32px;
    padding: 0 0 5px 5px;
}

/* sunken Win32 edit field */
.field {
    display: flex;
    align-items: center;
    width: 109px;
    height: 32px;
    padding-left: 3px;
    background: #fff;
    border-style: solid;
    border-width: 2px 1px 1px 2px;
    border-color: #7e7e7e #f8f8f8 #f8f8f8 #7e7e7e;
    white-space: nowrap;
    overflow: hidden;
}

.field.off {
    background: #f0f0f0;
    color: #9d9d9d;
}

.field.val {
    align-items: flex-start;
    padding-top: 3px;
}

.select span {
    flex: 1;
}

.arrow {
    width: 26px;
    height: 100%;
    flex-shrink: 0;
    display: flex;
    align-items: center;
    justify-content: center;
    background: #f0f0f0;
    border-right: 2px solid #7e7e7e;
    border-bottom: 2px solid #7e7e7e;
}

.arrow::before {
    content: "";
    border: 6px solid transparent;
    border-top: 6px solid #111;
    border-bottom: none;
}

.arrow.grey::before {
    border-top-color: #9a9a9a;
}

.os {
    display: flex;
    align-items: center;
    height: 29px;
    margin-top: 10px;
}

.os label {
    width: 148px;
    padding-left: 2px;
}

.os .field {
    width: 288px;
    height: 29px;
}

.svd-label {
    line-height: 20px;
    margin-top: 11px;
    padding-left: 3px;
}

.svd {
    display: flex;
    margin: 8px 0 0 5px;
    gap: 2px;
}

.svd .field {
    width: 403px;
    height: 31px;
    padding-bottom: 6px;
}

.dots {
    width: 26px;
    height: 33px;
    padding-top: 8px;
    background: #f0f0f0;
    border: none;
    border-right: 2px solid #7e7e7e;
    border-bottom: 2px solid #7e7e7e;
    color: #a0a0a0;
    font: 14px "Liberation Sans", sans-serif;
}

.check {
    display: flex;
    align-items: center;
    gap: 9px;
    height: 18px;
    white-space: nowrap;
}

.custom {
    margin: 7px 0 0 8px;
}

.cb {
    position: relative;
    display: block;
    width: 18px;
    height: 18px;
    flex-shrink: 0;
    background: #fff;
    border-style: solid;
    border-width: 2px 1px 1px 2px;
    border-color: #7e7e7e #f8f8f8 #f8f8f8 #7e7e7e;
}

.cb.on::after {
    content: "";
    position: absolute;
    left: 4px;
    top: 1px;
    width: 6px;
    height: 9px;
    border-right: 3px solid #000;
    border-bottom: 3px solid #000;
    transform: rotate(40deg);
}

.dim {
    color: #a6a6a6;
}

.dim .cb {
    background: #f0f0f0;
}

.rb {
    position: relative;
    display: block;
    width: 16px;
    height: 16px;
    background: #fff;
    border-radius: 50%;
    border: 1px solid #f8f8f8;
    border-top-color: #777;
    border-left-color: #777;
}

.rb.on::after {
    content: "";
    position: absolute;
    left: 4px;
    top: 4px;
    width: 6px;
    height: 6px;
    border-radius: 50%;
    background: #000;
}

/* etched group boxes */
.group {
    position: relative;
    border: 1px solid #a6a6a6;
    box-shadow: 1px 1px 0 #fbfbfb;
}

.group-title {
    position: absolute;
    top: -11px;
    left: 10px;
    padding: 0 2px;
    line-height: 20px;
    background: #f0f0f0;
    white-space: nowrap;
}

.codegen {
    padding: 10px 0 0 16px;
}

.compiler {
    display: flex;
    align-items: center;
}

.compiler label {
    width: 145px;
}

.compiler .field {
    width: 258px;
    height: 29px;
    color: #111;
    padding-left: 5px;
}

.libs {
    display: flex;
    margin: 44px 0 0 2px;
}

.micro {
    width: 143px;
}

.cross {
    margin: 119px 0 0 2px;
}

.mem {
    display: grid;
    grid-template-rows: 27px 39px 39px 32px 22px 39px 32px;
    justify-items: start;
    height: 257px;
}

.rom {
    grid-template-columns: 60px 77px 114px 109px 1fr;
    margin-left: 5px;
    width: 428px;
    padding-top: 16px;
}

.ram {
    grid-template-columns: 54px 80px 117px 109px 1fr;
    margin-top: 3px;
    height: 256px;
    padding-top: 13px;
}

.hd {
    justify-self: center;
    line-height: 20px;
    font-size: 15.500px;
    white-space: nowrap;
}

.hd.off-chip {
    justify-self: end;
    padding-right: 14px;
}

.hd.start {
    justify-self: start;
    width: 109px;
    text-align: center;
}

.hd.size {
    padding-right: 12px;
}

.c {
    justify-self: center;
    height: 32px;
    display: flex;
    align-items: center;
}

.n {
    justify-self: end;
    height: 32px;
    display: flex;
    align-items: center;
    padding-right: 13px;
}

.low {
    padding-top: 4px;
}

.lower {
    padding-top: 7px;
}

.ram .end {
    padding-right: 6px;
}

.ram .last {
    padding-right: 8px;
}

.on-chip {
    grid-column: 2;
    justify-self: end;
    padding-right: 11px;
    margin-top: -2px;
    line-height: 20px;
    font-size: 15.500px;
}

.on-chip + .c {
    grid-column: 1;
}

.dlg-buttons {
    height: 34px;
    flex-shrink: 0;
    display: flex;
    gap: 15.500px;
    margin: 12px 9px 9px 0;
    padding-left: 246px;
}

.dlg-buttons button {
    width: 138px;
    background: #f0f0f0;
    border-style: solid;
    border-width: 1px 2px 2px 1px;
    border-color: #fbfbfb #6e6e6e #6e6e6e #fbfbfb;
    font: 15px "Liberation Mono", monospace;
    -webkit-text-stroke: .25px #333;
    color: #222;
}

.dlg-buttons .help {
    margin-left: auto;
}

/* Build output */
.output {
    flex: 1;
    display: flex;
    flex-direction: column;
    background: #fff;
    padding-top: 7px;
    border-radius: 0 0 8px 8px;
    overflow: hidden;
}

.output-head {
    height: 27px;
    background: linear-gradient(#b6cadd, #cedcea);
}

.output-head .dock-close {
    margin: 0 -11px 0 10px;
}

.output-head .dock-pin {
    margin-right: -1px;
}

.output-body {
    flex: 1;
    display: flex;
    margin-top: 2px;
    border-top: 3px solid #777;
}

.output-text {
    flex: 1;
}

.vscroll {
    width: 10px;
    display: flex;
    flex-direction: column;
    justify-content: space-between;
    padding: 8px 0;
    overflow: hidden;
    background: #eee;
    color: #a8a8a8;
    font-size: 13px;
    line-height: 16px;
}

.output-scroll {
    height: 28px;
    flex-shrink: 0;
    display: flex;
    justify-content: space-between;
    align-items: center;
    padding: 0 13px 0 0;
    background: #eee;
    border-bottom: 2px solid #ddd;
    color: #aaa;
    font-size: 15px;
    margin-bottom: 3px;
}

/* Annotations */
.marks {
    position: absolute;
    left: 0;
    top: 0;
    width: 2534px;
    height: 1337px;
    pointer-events: none;
}
```
